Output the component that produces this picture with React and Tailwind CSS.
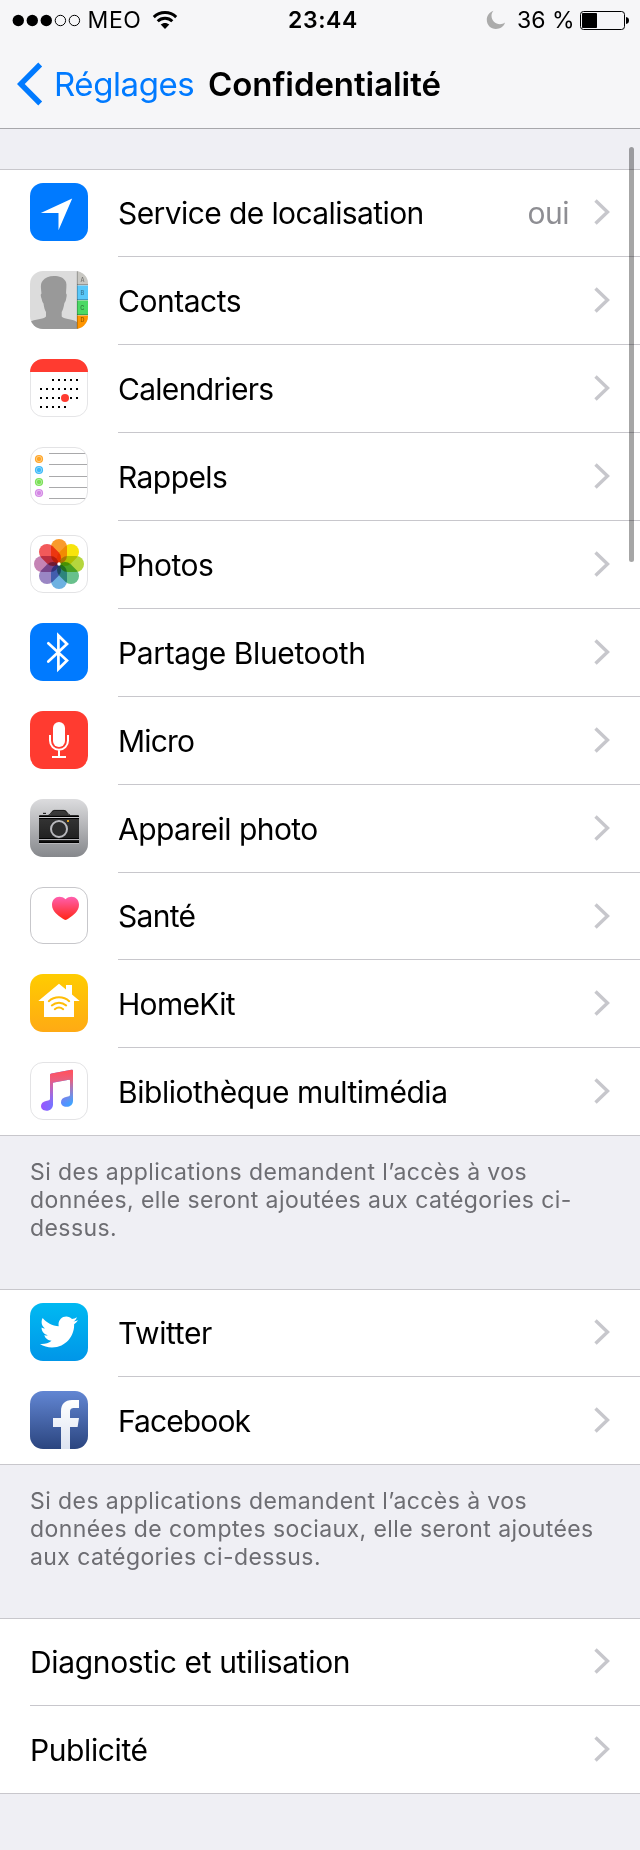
import React from "react";
import { FaTwitter } from "react-icons/fa";

function Tile({ children, fill = "#ffffff", border }) {
  return (
    <svg width="58" height="58" viewBox="0 0 58 58" className="block">
      <rect width="58" height="58" rx="13" fill={fill} />
      {children}
      {border && <rect x="0.5" y="0.5" width="57" height="57" rx="12.5" fill="none" stroke={border} />}
    </svg>
  );
}

function VGradient({ id, from, to }) {
  return (
    <linearGradient id={id} x1="0" y1="0" x2="0" y2="1">
      <stop offset="0" stopColor={from} />
      <stop offset="1" stopColor={to} />
    </linearGradient>
  );
}

function LocationIcon() {
  return (
    <Tile fill="#007aff">
      <path d="M42.2 15.6 28.5 47.2V30H10.8Z" fill="#fff" />
    </Tile>
  );
}

function ContactsIcon() {
  const tabs = [
    ["A", 0, 14, "#c8c7c2"],
    ["B", 14.5, 14.5, "#5ac8fa"],
    ["C", 29.5, 14.5, "#4cd964"],
    ["D", 44.5, 14, "#ff9500"],
  ];
  return (
    <Tile fill="#dcdcdc">
      <clipPath id="contacts-clip">
        <rect width="58" height="58" rx="13" />
      </clipPath>
      <g clipPath="url(#contacts-clip)">
        <path
          d="M24 5C29 5 34 6.500 36 11C37 14 36 19 36 22.500C37.200 23 36.600 26 36 28.500C35.700 30.500 34.800 31 34.300 32.500C33.500 37 32.800 39 31.700 41V45.500C33 48 42 47.500 47 51V58H0V51C4 48 14 48.500 16 45.500V41C14.500 39 14 36 13.500 32.500C12.500 31 12 30 11.700 28C10.800 25.500 10.200 23 11.500 22.500C11 18 10 13 12.500 10C15 6.500 19 5 24 5Z"
          fill="#999"
        />
        {tabs.map(([letter, y, h, color]) => (
          <g key={letter}>
            <rect x="47" y={y} width="11" height={h} fill={color} />
            <rect x="47" y={y + h - 0.8} width="11" height="0.8" fill="#000" opacity="0.3" />
            <text x="52.400" y={letter === "A" ? 11 : letter === "D" ? 51 : y + 9.500} textAnchor="middle" fontFamily="Inter, sans-serif" fontSize="5.500" fontWeight="600" fill="#000" fillOpacity="0.420">
              {letter}
            </text>
          </g>
        ))}
        <rect x="46.800" width="0.900" height="58" fill="#000" opacity="0.3" />
      </g>
    </Tile>
  );
}

function CalendarIcon() {
  const rows = [
    [21, [23, 29, 35, 41, 47]],
    [30, [11, 17, 23, 29, 35, 41, 47]],
    [39, [11, 17, 23, 29, 41, 47]],
    [48, [11, 17, 23, 29, 35]],
  ];
  return (
    <Tile>
      <rect x="0.5" y="0.5" width="57" height="57" rx="12.5" fill="none" stroke="#e5e5e7" />
      <path d="M0 13C0 5.820 5.820 0 13 0H45C52.180 0 58 5.820 58 13Z" fill="#ff3b30" />
      {rows.map(([y, xs]) => xs.map((x) => <rect key={`${x}-${y}`} x={x - 1} y={y - 1} width="2" height="2" fill="#000" />))}
      <circle cx="35" cy="39" r="4" fill="#ff3b30" />
    </Tile>
  );
}

function RemindersIcon() {
  const dots = [
    [12, "#ff9500"],
    [23, "#1badf8"],
    [35, "#63da38"],
    [46, "#cc73e1"],
  ];
  return (
    <Tile border="#e3e3e5">
      {dots.map(([y, c]) => (
        <g key={c}>
          <circle cx="9" cy={y} r="4.100" fill={c} opacity="0.85" />
          <circle cx="9" cy={y} r="2.700" fill="none" stroke="#fff" strokeWidth="0.600" opacity="0.7" />
        </g>
      ))}
      <path d="M19 6.500H56M19 17.500H58M19 29.500H58M19 40.500H58M19 51.500H56" stroke="#a9a9ab" />
    </Tile>
  );
}

function PhotosIcon() {
  const petals = ["#f99b2c", "#f7e40c", "#b5d63d", "#68c08c", "#6db1e1", "#9a86c4", "#c583b4", "#f2595a"];
  return (
    <Tile border="#e3e3e5">
      <g className="isolate">
        {petals.map((c, i) => (
          <rect key={c} x="21" y="4" width="16" height="24.500" rx="8" fill={c} transform={`rotate(${i * 45} 29 29)`} className="mix-blend-multiply" />
        ))}
      </g>
      <circle cx="29" cy="29" r="1.700" fill="#fff" />
    </Tile>
  );
}

function BluetoothIcon() {
  return (
    <Tile fill="#007aff">
      <path d="M18.300 20.300 37 37.500 28.400 46V12.500L37 21 18.300 38.500" fill="none" stroke="#fff" strokeWidth="2.700" strokeLinecap="round" />
    </Tile>
  );
}

function MicIcon() {
  return (
    <Tile fill="#ff3b30">
      <rect x="23" y="11" width="12" height="25" rx="6" fill="#fff" />
      <path d="M20 24V29.500A9 9.300 0 0 0 38 29.500V24M29 39V46M22 46H36" fill="none" stroke="#fff" strokeWidth="2" />
    </Tile>
  );
}

function CameraIcon() {
  return (
    <Tile fill="url(#camera-bg)">
      <defs>
        <VGradient id="camera-bg" from="#dcdcde" to="#86888c" />
        <VGradient id="camera-body" from="#3b3b3b" to="#1d1d1d" />
      </defs>
      <path d="M9 17.500C9 16.500 9.500 16 10.500 16H18.500C20 16 20.500 15 21 14C22 12 22.500 11 24.500 11H34C36 11 36.500 12 37.500 14C38 15 38.500 16 40 16H47.500C48.500 16 49 16.500 49 17.500V44H9Z" fill="url(#camera-body)" />
      <path d="M18.500 16C20.500 16 21 12 24.500 11.400H34C37 12 38 16 40 16" fill="none" stroke="#111" strokeWidth="0.800" />
      <rect x="13" y="13.800" width="3" height="1.200" fill="#222" />
      <rect x="9" y="16.800" width="40" height="1.200" fill="#000" />
      <rect x="9" y="18" width="40" height="1" fill="#c9c9cc" />
      <rect x="9" y="19" width="40" height="1" fill="#000" />
      <rect x="9" y="39" width="40" height="1" fill="#000" />
      <rect x="9" y="40" width="40" height="1" fill="#b5b5b9" />
      <rect x="9" y="42.500" width="40" height="1.500" fill="#000" />
      <rect x="9" y="44" width="40" height="1" fill="#c3c3c6" opacity="0.700" />
      <circle cx="29" cy="30" r="9.400" fill="#2a2a2a" />
      <circle cx="29" cy="30" r="8" fill="#2c2c2c" stroke="#b9b9bd" strokeWidth="2" />
      <rect x="37" y="21" width="2" height="2" fill="#e0a020" />
    </Tile>
  );
}

function HealthIcon() {
  return (
    <svg width="58" height="57" viewBox="0 0 58 57" className="block">
      <defs>
        <VGradient id="heart" from="#ff5fae" to="#ff2616" />
      </defs>
      <rect x="0.500" y="0.500" width="57" height="56" rx="12.500" fill="#fff" stroke="#c7c7cb" />
      <path d="M35.500 12.300C33.500 10.500 31.500 9.800 29.500 9.800C25.300 9.800 22 13 22 17.800C22 24.500 28 28.500 32.500 31.600C34.800 33.300 36.200 33.300 38.500 31.600C43 28.500 49 24.500 49 17.800C49 13 45.700 9.800 41.500 9.800C39.500 9.800 37.500 10.500 35.500 12.300Z" fill="url(#heart)" />
    </svg>
  );
}

function HomeKitIcon() {
  return (
    <Tile fill="url(#home-bg)">
      <defs>
        <VGradient id="home-bg" from="#ffcc00" to="#ffaa14" />
      </defs>
      <path d="M29 9.800 36 15.500V11H42V20.500L49.700 27H44V43H14V27H8.300Z" fill="#fff" />
      <path d="M18.800 27.200C24.500 22 33.500 22 39.200 27.200M21.800 31.400C26 27.700 32 27.700 36.200 31.400M24.800 35.200C27.300 33.100 30.700 33.100 33.200 35.200" fill="none" stroke="#ffbd08" strokeWidth="2" strokeLinecap="round" />
    </Tile>
  );
}

function MusicIcon() {
  return (
    <Tile border="#e3e3e5">
      <defs>
        <linearGradient id="note-cool" x1="11" y1="0" x2="43" y2="0" gradientUnits="userSpaceOnUse">
          <stop offset="0" stopColor="#9a55ff" />
          <stop offset="1" stopColor="#38a8ff" />
        </linearGradient>
        <linearGradient id="note-warm" x1="0" y1="10" x2="0" y2="42" gradientUnits="userSpaceOnUse">
          <stop offset="0" stopColor="#ff5260" />
          <stop offset="0.250" stopColor="#f85b72" stopOpacity="0.900" />
          <stop offset="1" stopColor="#e060c0" stopOpacity="0" />
        </linearGradient>
      </defs>
      {["url(#note-cool)", "url(#note-warm)"].map((f) => (
        <path
          key={f}
          d="M20 13C20 12 20.500 11.600 21.500 11.400L41.300 7.700C42.500 7.500 43 7.900 43 9V38.500C43 42.500 40.500 44.800 36.500 44.800C33 44.800 31 42.800 31 40.200C31 37.300 33 35.600 36 35L38.200 34.600C39.500 34.300 40 33.800 40 32.500V18.600C40 17.900 39.700 17.700 39 17.800L24 20.600C23.300 20.700 23 21 23 21.700V42.300C23 46.300 20.300 48.800 16.500 48.800C13 48.800 11 46.700 11 44.100C11 41.300 13 39.600 16 39L18.200 38.600C19.500 38.300 20 37.800 20 36.500Z"
          fill={f}
        />
      ))}
    </Tile>
  );
}

function TwitterIcon() {
  return (
    <Tile fill="url(#twitter-bg)">
      <defs>
        <VGradient id="twitter-bg" from="#00b9f2" to="#0096e8" />
      </defs>
      <FaTwitter x="10" y="10" size={38} color="#fff" />
    </Tile>
  );
}

function FacebookIcon() {
  return (
    <Tile fill="url(#facebook-bg)">
      <defs>
        <VGradient id="facebook-bg" from="#6286d3" to="#2b457f" />
        <VGradient id="facebook-mark" from="#ffffff" to="#dde3f1" />
      </defs>
      <path d="M31 58V36H23V27H31V20.500C31 13 35 9 42 9H49V17H44.500C41 17 40 18.300 40 21V27H49L47.600 36H40V58Z" fill="url(#facebook-mark)" />
    </Tile>
  );
}

function Chevron() {
  return (
    <svg width="16" height="26" viewBox="0 0 16 26" className="block">
      <path d="M1.500 1.500 13.500 13 1.500 24.500" fill="none" stroke="#c7c7cc" strokeWidth="3.400" />
    </svg>
  );
}

function Row({ label, icon, value, tracking, short, last, iconOffset }) {
  return (
    <div className={`flex bg-white ${short || last ? "h-[87px]" : "h-[88px]"}`}>
      {icon && <div className={`ml-[30px] w-[58px] shrink-0 ${short && !iconOffset ? "pt-[13px]" : "pt-[14px]"}`}>{icon}</div>}
      <div className={`ml-[30px] flex flex-1 items-start pr-[30px] ${last ? "" : "border-b border-[#c8c7cc]"}`}>
        <span className={`flex-1 whitespace-nowrap ${short ? "h-[86px] leading-[87px]" : "h-[87px] leading-[88px]"} ${tracking}`}>{label}</span>
        {value && <span className="mr-[25px] h-[86px] leading-[87px] tracking-[-0.5px] text-[#8e8e93]">{value}</span>}
        <span className={short && !iconOffset ? "mt-[29px]" : "mt-[30px]"}>
          <Chevron />
        </span>
      </div>
    </div>
  );
}

function Section({ children }) {
  return <section className="border-y border-[#c8c7cc] text-[30px] text-black">{children}</section>;
}

function Note({ lines }) {
  return (
    <p className="h-[153px] pt-[22px] pl-[30px] text-[23px] leading-[28px] tracking-[0.42px] whitespace-nowrap text-[#6d6d72]">
      {lines.map((l) => (
        <span key={l} className="block">
          {l}
        </span>
      ))}
    </p>
  );
}

function StatusBar() {
  return (
    <div className="grid h-[41px] grid-cols-3 text-[23px] leading-[41px] whitespace-nowrap">
      <div className="flex pl-[12px]">
        <svg width="69" height="41" viewBox="0 0 69 41">
          {[6.300, 20.300, 34.300].map((x) => (
            <circle key={x} cx={x} cy="20.500" r="5.700" />
          ))}
          {[48.400, 62.400].map((x) => (
            <circle key={x} cx={x} cy="20.500" r="5.200" fill="none" stroke="#000" />
          ))}
        </svg>
        <span className="ml-[6.500px] tracking-[0.6px]">MEO</span>
        <svg width="26" height="41" viewBox="0 0 26 41" className="ml-[10px]" fill="none" stroke="#000" strokeWidth="2.900">
          <path d="M1.800 17.100C8 11 18 11 24.200 17.100" />
          <path d="M5.700 21.300C9.700 17.300 16.300 17.300 20.300 21.300" />
          <path d="M13 29 8.700 24.600C11.100 22.300 14.900 22.300 17.300 24.600Z" fill="#000" stroke="none" />
        </svg>
      </div>
      <div className="pl-[6px] text-center font-semibold tracking-[0.6px]">23:44</div>
      <div className="flex justify-end pr-[11px]">
        <svg width="20" height="41" viewBox="0 0 20 41">
          <path d="M7.500 10.800C2.500 12.500 0.800 16.500 0.800 20C0.800 25 4.800 29 9.800 29C14.200 29 18 26.500 19 22.600C17.500 23.700 15.800 24.200 14 24.200C9.300 24.200 5.500 20.500 5.500 15.800C5.500 13.900 6.300 12.200 7.500 10.800Z" fill="#ababab" />
        </svg>
        <span className="ml-[11px]">36 %</span>
        <svg width="49" height="41" viewBox="0 0 49 41" className="ml-[5.500px]">
          <rect x="0.500" y="11.500" width="44" height="18" rx="3" fill="none" stroke="#000" />
          <rect x="2" y="13" width="15" height="15" rx="0.800" />
          <path d="M46 17C48 17.300 49 18.500 49 20.500S48 23.700 46 24Z" />
        </svg>
      </div>
    </div>
  );
}

export default function App() {
  return (
    <main className="relative h-[1850px] w-[640px] overflow-hidden bg-[#efeff4] font-['Inter',sans-serif] text-black">
      <header className="h-[129px] border-b border-[#a7a7ab] bg-[#f6f6f8]">
        <StatusBar />
        <nav className="flex h-[87px] text-[33px] leading-[86px] whitespace-nowrap">
          <svg width="26" height="44" viewBox="0 0 26 44" className="mt-[21px] ml-[17px]">
            <path d="M23.200 2.500 3.800 22 23.200 41.500" fill="none" stroke="#007aff" strokeWidth="5.500" />
          </svg>
          <span className="ml-[11px] w-[154px] tracking-[-0.42px] text-[#007aff]">Réglages</span>
          <h1 className="font-semibold tracking-[-0.07px]">Confidentialité</h1>
        </nav>
      </header>
      <div className="h-[40px]" />
      <Section>
        <Row short label="Service de localisation" tracking="tracking-[-0.6px]" value="oui" icon={<LocationIcon />} />
        <Row label="Contacts" tracking="tracking-[-0.47px]" icon={<ContactsIcon />} />
        <Row label="Calendriers" tracking="tracking-[-0.72px]" icon={<CalendarIcon />} />
        <Row label="Rappels" tracking="tracking-[-0.58px]" icon={<RemindersIcon />} />
        <Row label="Photos" tracking="tracking-[-0.48px]" icon={<PhotosIcon />} />
        <Row label="Partage Bluetooth" tracking="tracking-[-0.38px]" icon={<BluetoothIcon />} />
        <Row label="Micro" tracking="tracking-[-0.82px]" icon={<MicIcon />} />
        <Row label="Appareil photo" tracking="tracking-[-0.55px]" icon={<CameraIcon />} />
        <Row short iconOffset label="Santé" tracking="tracking-[-0.7px]" icon={<HealthIcon />} />
        <Row label="HomeKit" tracking="tracking-[-0.7px]" icon={<HomeKitIcon />} />
        <Row last label="Bibliothèque multimédia" tracking="tracking-[-0.45px]" icon={<MusicIcon />} />
      </Section>
      <Note lines={["Si des applications demandent l’accès à vos", "données, elle seront ajoutées aux catégories ci-", "dessus."]} />
      <Section>
        <Row short label="Twitter" tracking="tracking-[-0.4px]" icon={<TwitterIcon />} />
        <Row last label="Facebook" tracking="tracking-[-0.9px]" icon={<FacebookIcon />} />
      </Section>
      <Note lines={["Si des applications demandent l’accès à vos", "données de comptes sociaux, elle seront ajoutées", "aux catégories ci-dessus."]} />
      <Section>
        <Row short label="Diagnostic et utilisation" tracking="tracking-[-0.35px]" />
        <Row last label="Publicité" tracking="tracking-[-0.39px]" />
      </Section>
      <div className="absolute top-[147px] right-[6px] h-[415px] w-[5px] rounded-full bg-black/35" />
    </main>
  );
}
